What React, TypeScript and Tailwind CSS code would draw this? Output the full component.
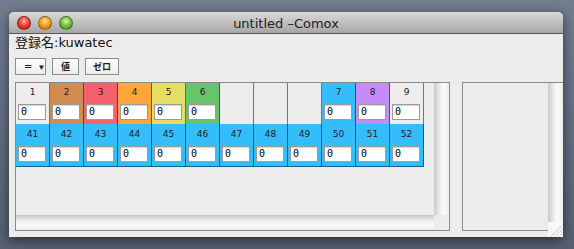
import React from "react";

type Cell = { n?: string; bg: string };

const row1: Cell[] = [
    { n: "1", bg: "bg-[#ededed]" },
    { n: "2", bg: "bg-[#cf8b50]" },
    { n: "3", bg: "bg-[#f4606e]" },
    { n: "4", bg: "bg-[#ffa53b]" },
    { n: "5", bg: "bg-[#e6de64]" },
    { n: "6", bg: "bg-[#66c46a]" },
    { bg: "bg-[#ececec]" },
    { bg: "bg-[#ececec]" },
    { bg: "bg-[#ececec]" },
    { n: "7", bg: "bg-[#35bdfb]" },
    { n: "8", bg: "bg-[#c58cf7]" },
    { n: "9", bg: "bg-[#ededed]" },
];

const row2: string[] = ["41", "42", "43", "44", "45", "46", "47", "48", "49", "50", "51", "52"];

const sans = "font-['DejaVu_Sans','Noto_Sans_CJK_JP',sans-serif]";

function ValueBox() {
    return (
        <div className="w-[28px] h-[16px] border border-[#9c9c9c] bg-white shadow-[inset_0_1px_1px_rgba(0,0,0,0.18)] pl-[2px] font-['DejaVu_Sans_Mono',monospace] text-[10px] leading-[14px] text-black">
            0
        </div>
    );
}

function NumCell({ n, bg, bottom }: { n?: string; bg: string; bottom?: boolean }) {
    return (
        <div
            className={
                "w-[34px] border-r border-black/50 pl-[2px] " +
                bg +
                (bottom ? " h-[43px] pt-[4px] border-b" : " h-[41px] pt-[3px]")
            }
        >
            {n && (
                <>
                    <div className={"h-[12px] w-[29px] text-center text-[9px] leading-[12px] text-[#222] " + sans}>{n}</div>
                    <div className="mt-[6px]">
                        <ValueBox />
                    </div>
                </>
            )}
        </div>
    );
}

function Light({ color }: { color: string }) {
    return <div className={"w-[14px] h-[14px] rounded-full border border-black/30 " + color} />;
}

function Grip() {
    return (
        <svg width="15" height="15" viewBox="0 0 15 15">
            <rect width="15" height="15" fill="#f7f7f7" />
            <g stroke="#9a9a9a" strokeWidth="1" strokeDasharray="1 1">
                <line x1="3" y1="14.5" x2="14.5" y2="3" />
                <line x1="7" y1="14.5" x2="14.5" y2="7" />
                <line x1="11" y1="14.5" x2="14.5" y2="11" />
            </g>
        </svg>
    );
}

export default function App() {
    return (
        <div className="w-[574px] h-[249px] overflow-hidden bg-gradient-to-b from-[#737d91] to-[#566070] pt-[12px] pl-[9px]">
            <div className="w-[554px] h-[225px] rounded-t-[5px] bg-[#ececec] shadow-[0_3px_12px_rgba(0,0,0,0.55)] flex flex-col overflow-hidden">
                {/* title bar */}
                <div className="h-[22px] grid grid-cols-[1fr_auto_1fr] border-b border-[#555] bg-gradient-to-b from-[#d9d9d9] to-[#a7a7a7] rounded-t-[5px]">
                    <div className="flex gap-[7px] pl-[8px] pt-[4px]">
                        <Light color="bg-[radial-gradient(circle_at_50%_35%,#ffb0a8_0%,#f0413a_45%,#b5120d_100%)]" />
                        <Light color="bg-[radial-gradient(circle_at_50%_35%,#ffe2a0_0%,#f3a227_45%,#b86a07_100%)]" />
                        <Light color="bg-[radial-gradient(circle_at_50%_35%,#d8f5b0_0%,#79c23d_45%,#3e8a18_100%)]" />
                    </div>
                    <div className={"pt-[1px] text-[13px] leading-[21px] text-[#222] " + sans}>untitled –Comox</div>
                    <div />
                </div>

                <div className="pl-[6px] flex flex-col">
                    <div className={"mt-[1px] h-[16px] text-[13px] leading-[16px] text-[#111] " + sans}>登録名:kuwatec</div>

                    {/* toolbar */}
                    <div className="mt-[7px] h-[17px] flex gap-[6px]">
                        <div className="w-[31px] h-[17px] border border-[#8c8c8c] bg-gradient-to-b from-white to-[#ececec] flex items-center pl-[8px] gap-[5px] text-[10px] text-[#222]">
                            <span className={"leading-[10px] " + sans}>=</span>
                            <span className="leading-[8px] text-[8px]">▼</span>
                        </div>
                        <div className="w-[27px] h-[17px] border border-[#8c8c8c] bg-gradient-to-b from-white to-[#ececec] flex items-center justify-center text-[9px] font-bold text-[#222] font-['Noto_Sans_CJK_JP',sans-serif]">
                            値
                        </div>
                        <div className="w-[34px] h-[17px] border border-[#8c8c8c] bg-gradient-to-b from-white to-[#ececec] flex items-center justify-center text-[9px] font-bold text-[#222] font-['Noto_Sans_CJK_JP',sans-serif]">
                            ゼロ
                        </div>
                    </div>

                    {/* panels */}
                    <div className="mt-[7px] h-[155px] flex items-start">
                        <div className="w-[435px] h-[149px] border border-[#8a8a8a] flex flex-col">
                            <div className="flex flex-1">
                                <div className="flex-1">
                                    <div className="flex">
                                        {row1.map((c, i) => (
                                            <NumCell key={i} n={c.n} bg={c.bg} />
                                        ))}
                                    </div>
                                    <div className="flex">
                                        {row2.map((n) => (
                                            <NumCell key={n} n={n} bg="bg-[#33bdfb]" bottom />
                                        ))}
                                    </div>
                                </div>
                                <div className="w-[15px] bg-[linear-gradient(to_right,#c9c9c9,#f1f1f1_45%,#fbfbfb_65%,#ebebeb)]" />
                            </div>
                            <div className="h-[15px] flex">
                                <div className="flex-1 bg-[linear-gradient(to_bottom,#c6c6c6,#efefef_40%,#fbfbfb_70%,#ebebeb)]" />
                                <div className="w-[15px] bg-[#ececec]" />
                            </div>
                        </div>

                        <div className="ml-[12px] w-[86px] h-[149px] border-l border-t border-b border-[#8a8a8a]" />
                        <div className="w-[15px] h-[155px] flex flex-col border-t border-[#8a8a8a]">
                            <div className="flex-1 bg-[linear-gradient(to_right,#c9c9c9,#f1f1f1_45%,#fbfbfb_65%,#ebebeb)]" />
                            <Grip />
                        </div>
                    </div>
                </div>
            </div>
        </div>
    );
}
